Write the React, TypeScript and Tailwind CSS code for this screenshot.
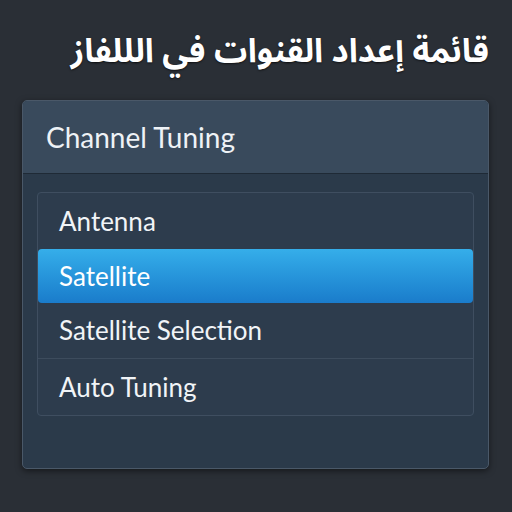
const items = ["Antenna", "Satellite", "Satellite Selection", "Auto Tuning"];

export default function App() {
  return (
    <div className="h-[512px] w-[512px] overflow-hidden bg-[#2a2f36] pt-[30px] [font-family:Lato,'Noto_Sans',sans-serif]">
      <h1
        dir="rtl"
        className="pr-[23px] text-right text-[33px] font-bold leading-[44px] text-white [font-family:'Noto_Sans_Arabic','DejaVu_Sans',sans-serif] [text-shadow:0_1px_2px_rgba(0,0,0,0.6)]"
      >
        قائمة إعداد القنوات في الللفاز
      </h1>
      <div className="ml-[22px] mt-[26px] h-[369px] w-[467px] overflow-hidden rounded-[5px] border border-[#4a5868] bg-[#2b3a4a] shadow-[0_2px_6px_rgba(0,0,0,0.5)]">
        <div className="flex h-[73px] items-center border-b border-[#1f2a36] bg-[#394a5c] pl-[23px] text-[28px] text-[#eef2f6]">
          Channel Tuning
        </div>
        <div className="mx-[14px] mt-[18px] overflow-hidden rounded-[4px] border border-[#3f4e60] bg-[#2d3c4d]">
          {items.map((label, i) => {
            const active = i === 1;
            return (
              <div
                key={label}
                className={
                  active
                    ? "flex h-[54px] items-center rounded-[4px] bg-gradient-to-b from-[#35aeea] to-[#1a7ccb] pl-[21px] text-[26px] text-white"
                    : `flex h-[56px] items-center pl-[21px] text-[26px] text-[#f1f4f7] ${i === 2 ? "border-b border-[#3d4c5d]" : ""}`
                }
              >
                {label}
              </div>
            );
          })}
        </div>
      </div>
    </div>
  );
}
